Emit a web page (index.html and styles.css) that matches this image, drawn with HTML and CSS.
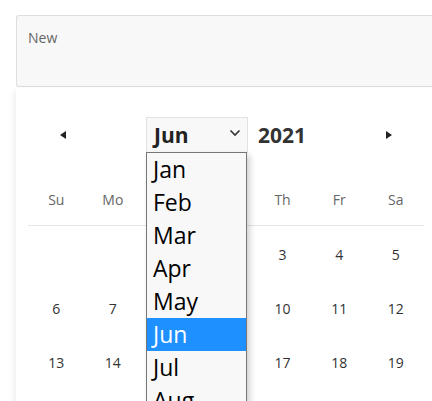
FILE: index.html
```html
<!DOCTYPE html>
<html lang="en">
<head>
<meta charset="utf-8">
<title>Date picker</title>
<link rel="stylesheet" href="styles.css">
</head>
<body>
<div class="page">
  <div class="note">New</div>
  <div class="calendar">
    <div class="cal-header">
      <button class="nav-btn" aria-label="Previous month">
        <svg width="6" height="8" viewBox="0 0 6 8"><path d="M6 0 L6 8 L0 4 Z" fill="#222"/></svg>
      </button>
      <div class="title">
        <div class="month-select">
          <span class="month-value">Jun</span>
          <svg class="chev" width="12" height="8" viewBox="0 0 12 8"><path d="M1.5 1.5 L6 6 L10.5 1.5" fill="none" stroke="#333" stroke-width="1.6"/></svg>
        </div>
        <span class="year">2021</span>
      </div>
      <button class="nav-btn" aria-label="Next month">
        <svg width="6" height="8" viewBox="0 0 6 8"><path d="M0 0 L0 8 L6 4 Z" fill="#222"/></svg>
      </button>
    </div>
    <div class="grid weekdays">
      <span>Su</span><span>Mo</span><span>Tu</span><span>We</span><span>Th</span><span>Fr</span><span>Sa</span>
    </div>
    <div class="divider"></div>
    <div class="grid days">
      <span></span><span></span><span>1</span><span>2</span><span>3</span><span>4</span><span>5</span>
      <span>6</span><span>7</span><span>8</span><span>9</span><span>10</span><span>11</span><span>12</span>
      <span>13</span><span>14</span><span>15</span><span>16</span><span>17</span><span>18</span><span>19</span>
    </div>
    <ul class="month-list">
      <li>Jan</li><li>Feb</li><li>Mar</li><li>Apr</li><li>May</li>
      <li class="selected">Jun</li><li>Jul</li><li>Aug</li>
    </ul>
  </div>
</div>
</body>
</html>
```

FILE: styles.css
```css
html, body {
  margin: 0;
  padding: 0;
  background: #fff;
  overflow: hidden;
  height: 401px;
}

body {
  font-family: "Segoe UI", "Open Sans", "Noto Sans", sans-serif;
  color: #333;
}

.page {
  padding: 15px 0 0 16px;
}

.note {
  height: 58px;
  padding: 12px 11px 0;
  background: #f8f8f8;
  border: 1px solid #dedede;
  border-right: none;
  border-radius: 3px 0 0 3px;
  font-size: 14px;
  line-height: 20px;
  color: #666;
}

.calendar {
  position: relative;
  margin-top: 1px;
  width: 396px;
  padding: 29px 12px 0;
  background: #fff;
  box-shadow: -2px 2px 6px rgba(0, 0, 0, 0.07);
  height: 300px;
}

.cal-header {
  display: flex;
  align-items: center;
  justify-content: space-between;
  height: 36px;
}

.nav-btn {
  width: 70px;
  height: 36px;
  padding: 0;
  border: none;
  background: transparent;
  display: flex;
  align-items: center;
  justify-content: center;
}

.title {
  display: flex;
  align-items: center;
  gap: 10px;
}

.month-select {
  box-sizing: border-box;
  width: 102px;
  height: 36px;
  display: flex;
  align-items: center;
  justify-content: space-between;
  padding: 0 6px 0 7px;
  border: 1px solid #e2e2e2;
  background: #f8f8f8;
}

.month-value {
  font-size: 21px;
  font-weight: 700;
  color: #222;
  line-height: 1;
}

.chev {
  margin-top: -4px;
}

.year {
  font-size: 21px;
  font-weight: 700;
  color: #333;
  line-height: 1;
}

.grid {
  display: grid;
  grid-template-columns: repeat(7, 1fr);
  text-align: center;
}

.weekdays {
  margin-top: 33px;
  height: 26px;
  align-items: center;
  font-size: 14px;
  color: #666;
}

.divider {
  margin-top: 13px;
  height: 1px;
  background: #e6e6e6;
}

.days {
  grid-auto-rows: 54px;
  margin-top: 1px;
  align-items: center;
  font-size: 14px;
  color: #333;
}

.month-list {
  position: absolute;
  left: 130px;
  top: 64px;
  width: 99px;
  margin: 0;
  padding: 0;
  list-style: none;
  background: #f8f8f8;
  border: 1px solid #767676;
  box-shadow: 3px 3px 6px rgba(0, 0, 0, 0.18);
}

.month-list li {
  height: 33px;
  line-height: 33px;
  padding-left: 6px;
  font-size: 23px;
  color: #000;
}

.month-list li.selected {
  background: #1e90ff;
  color: #fff;
}
```
